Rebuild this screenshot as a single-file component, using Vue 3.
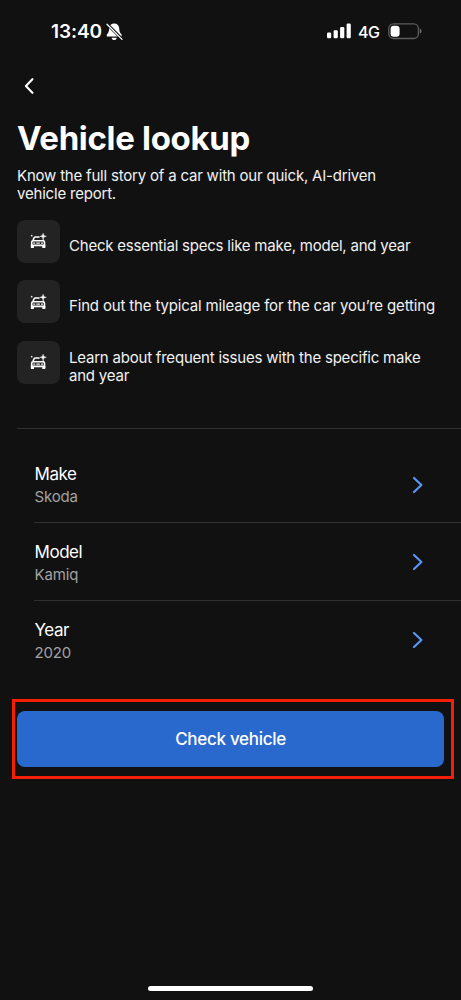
<script setup>
const features = [
  { text: 'Check essential specs like make, model, and year', cls: 'f1' },
  { text: 'Find out the typical mileage for the car you’re getting', cls: 'f2' },
  { text: 'Learn about frequent issues with the specific make and year', cls: 'f3' }
]
const fields = [
  { label: 'Make', value: 'Skoda' },
  { label: 'Model', value: 'Kamiq' },
  { label: 'Year', value: '2020' }
]
</script>

<template>
  <main class="screen">
    <header class="status">
      <span class="time">13:40</span>
      <svg class="bell" width="17" height="18" viewBox="0 0 17 18">
        <path d="M8.2 0.6C11 0.6 13 2.5 13.2 5.2C13.4 8.5 13.8 9.8 15.6 11.6V13.6H0.8V11.6C2.6 9.8 3 8.4 3.2 5.3C3.4 2.5 5.4 0.6 8.2 0.6Z" fill="#fff" />
        <path d="M5.6 14.7H10.8C10.5 16.3 9.5 17 8.2 17S5.9 16.3 5.6 14.7Z" fill="#fff" />
        <path d="M1.3 1.3L16 16" stroke="#111" stroke-width="3" />
        <path d="M1 1.2L16 16.4" stroke="#fff" stroke-width="1.3" stroke-linecap="round" />
      </svg>
      <svg class="signal" width="24" height="16" viewBox="0 0 24 16" fill="#fff">
        <rect x="0" y="9.6" width="4.2" height="5.7" rx="1.2" />
        <rect x="6.6" y="7.2" width="4.2" height="8.1" rx="1.2" />
        <rect x="13.1" y="4" width="4.2" height="11.3" rx="1.2" />
        <rect x="19.6" y="0.5" width="4.2" height="14.8" rx="1.2" />
      </svg>
      <span class="network">4G</span>
      <svg class="battery" width="34" height="17" viewBox="0 0 34 17">
        <rect x="0.8" y="0.9" width="29.6" height="14.6" rx="4.7" fill="none" stroke="#5c5c5c" stroke-width="1.3" />
        <rect x="2.6" y="2.7" width="9" height="11" rx="3.2" fill="#fff" />
        <path d="M31.8 5.6C34 6.6 34 9.8 31.8 10.8Z" fill="#707070" />
      </svg>
    </header>

    <button class="back" aria-label="Back">
      <svg width="10" height="16" viewBox="0 0 10 16">
        <path d="M8.4 1.2L1.9 8L8.4 14.8" fill="none" stroke="#fff" stroke-width="2.1" stroke-linecap="round" stroke-linejoin="round" />
      </svg>
    </button>

    <h1>Vehicle lookup</h1>
    <p class="intro">Know the full story of a car with our quick, AI-driven<br />vehicle report.</p>

    <ul class="features">
      <li v-for="f in features" :key="f.text" :class="f.cls">
        <span class="tile">
          <svg width="17" height="16" viewBox="0 0 17 16">
            <path d="M2.8 8.2L3.9 5Q4.2 4 5.2 4H9.6M12.9 6.7L13.6 8.2M1.7 14V9.2Q1.7 7.8 3.1 7.8H13.1Q14.5 7.8 14.5 9.2V14M1.7 12.4H14.5" fill="none" stroke="#fff" stroke-width="1.6" />
            <path d="M3.2 10.2H5.2M11 10.2H13M6.3 10.2H9.9" stroke="#eee" stroke-width="1.3" />
            <path d="M0.9 12H3.9V14.9H0.9ZM12.3 12H15.3V14.9H12.3Z" fill="#fff" />
            <path d="M13.1 0.2L13.9 2.5L16.3 3.3L13.9 4.1L13.1 6.5L12.3 4.1L9.9 3.3L12.3 2.5Z" fill="#fff" stroke="#fff" stroke-width="0.4" />
            <circle cx="1.7" cy="2.7" r="0.9" fill="#ddd" />
          </svg>
        </span>
        <span class="feature-text">{{ f.text }}</span>
      </li>
    </ul>

    <section class="fields">
      <button v-for="f in fields" :key="f.label" class="field">
        <span class="copy">
          <span class="label">{{ f.label }}</span>
          <span class="value">{{ f.value }}</span>
        </span>
        <svg width="12" height="18" viewBox="0 0 12 18">
          <path d="M2 2L9.4 9L2 16" fill="none" stroke="#5797f5" stroke-width="2.2" stroke-linecap="round" stroke-linejoin="round" />
        </svg>
      </button>
    </section>

    <div class="highlight">
      <button class="submit">Check vehicle</button>
    </div>

    <div class="home"></div>
  </main>
</template>

<style>
html, body { margin: 0; background: #111; }
</style>

<style scoped>
* { box-sizing: border-box; }
.screen {
  width: 461px;
  height: 1000px;
  overflow: hidden;
  display: flex;
  flex-direction: column;
  background: #111;
  color: #fff;
  font-family: Inter, "Liberation Sans", sans-serif;
}
button { border: 0; padding: 0; background: none; color: inherit; font: inherit; text-align: left; }
svg { display: block; flex: none; }
.status { height: 62px; display: flex; align-items: center; padding: 0 39px 0 51px; flex: none; }
.time { font-size: 19px; font-weight: 600; letter-spacing: -0.1px; width: 55px; white-space: nowrap; }
.bell { margin-top: 1px; }
.signal { margin-left: auto; }
.network { font-size: 16px; font-weight: 500; margin: 1px 0 0 7px; width: 30px; letter-spacing: -0.5px; }
.back { height: 48px; padding-left: 23.5px; display: flex; align-items: center; flex: none; }
h1 { margin: 7px 0 0 17px; font-size: 33px; font-weight: 700; line-height: 42px; letter-spacing: -0.32px; }
.intro { margin: 8px 0 0 17px; font-size: 15px; line-height: 18.4px; letter-spacing: -0.2px; white-space: nowrap; color: #f1f1f1; }
.features { list-style: none; margin: 16px 17px 0; padding: 0; height: 208px; display: flex; flex-direction: column; gap: 17.5px; flex: none; }
.features li { display: flex; height: 43px; flex: none; }
.tile { width: 43px; height: 43px; flex: none; border-radius: 8px; background: #232323; display: flex; align-items: center; justify-content: center; }
.feature-text { margin: 17px 0 0 9px; font-size: 15px; line-height: 18.4px; letter-spacing: -0.22px; color: #f1f1f1; white-space: nowrap; }
.f2 .feature-text { letter-spacing: -0.16px; }
.f3 .feature-text { margin-top: 8px; white-space: normal; width: 366px; letter-spacing: -0.21px; }
.fields { margin-left: 17px; padding: 17px 0 0 17px; border-top: 1px solid #303030; flex: none; }
.field { width: 100%; height: 77.6px; display: flex; align-items: center; justify-content: space-between; padding: 1.4px 37px 0 0; border-bottom: 1px solid #303030; }
.field:last-child { border-bottom: 0; }
.copy { display: flex; flex-direction: column; gap: 2px; padding: 1px 0 0 0.5px; }
.label { font-size: 17px; line-height: 22px; letter-spacing: -0.45px; }
.value { font-size: 15px; line-height: 20px; letter-spacing: -0.15px; color: #a2a2a2; }
.highlight { margin: 20px 0 0 12px; width: 442px; height: 80px; border: 3px solid #f51f06; padding: 9px 7px 0 2px; flex: none; }
.submit { width: 427px; height: 56px; border-radius: 8px; background: #2969ce; text-align: center; font-size: 17px; font-weight: 500; letter-spacing: -0.3px; }
.home { width: 165px; height: 5px; border-radius: 3px; background: #fff; margin: auto auto 9px 148px; }
</style>
